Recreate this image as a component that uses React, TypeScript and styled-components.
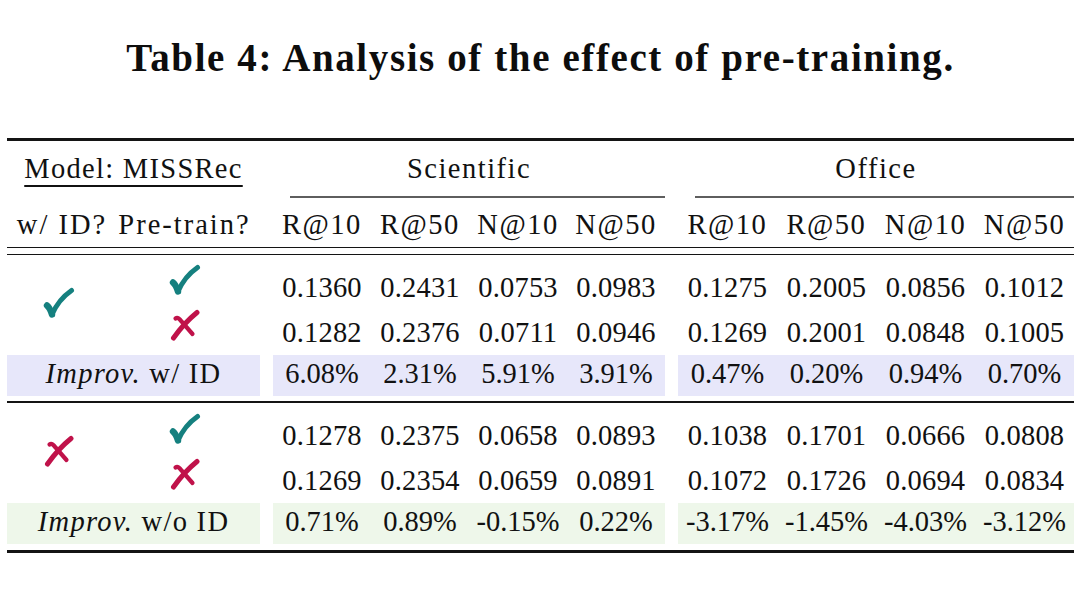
import styled, { createGlobalStyle } from "styled-components";

const TEAL = "#15807f";
const CRIMSON = "#c0124a";

const GlobalStyle = createGlobalStyle`
  html, body {
    margin: 0;
    padding: 0;
    background: #ffffff;
  }
  body {
    font-family: "Liberation Serif", "Times New Roman", serif;
    color: #111111;
  }
`;

type Mark = "yes" | "no";

interface DataRow {
  pretrain: Mark;
  scientific: string[];
  office: string[];
}

interface Block {
  withId: Mark;
  rows: DataRow[];
  label: string;
  tone: "lavender" | "mint";
  scientificGain: string[];
  officeGain: string[];
}

const blocks: Block[] = [
  {
    withId: "yes",
    rows: [
      {
        pretrain: "yes",
        scientific: ["0.1360", "0.2431", "0.0753", "0.0983"],
        office: ["0.1275", "0.2005", "0.0856", "0.1012"],
      },
      {
        pretrain: "no",
        scientific: ["0.1282", "0.2376", "0.0711", "0.0946"],
        office: ["0.1269", "0.2001", "0.0848", "0.1005"],
      },
    ],
    label: "w/ ID",
    tone: "lavender",
    scientificGain: ["6.08%", "2.31%", "5.91%", "3.91%"],
    officeGain: ["0.47%", "0.20%", "0.94%", "0.70%"],
  },
  {
    withId: "no",
    rows: [
      {
        pretrain: "yes",
        scientific: ["0.1278", "0.2375", "0.0658", "0.0893"],
        office: ["0.1038", "0.1701", "0.0666", "0.0808"],
      },
      {
        pretrain: "no",
        scientific: ["0.1269", "0.2354", "0.0659", "0.0891"],
        office: ["0.1072", "0.1726", "0.0694", "0.0834"],
      },
    ],
    label: "w/o ID",
    tone: "mint",
    scientificGain: ["0.71%", "0.89%", "-0.15%", "0.22%"],
    officeGain: ["-3.17%", "-1.45%", "-4.03%", "-3.12%"],
  },
];

const metrics = ["R@10", "R@50", "N@10", "N@50"];

function CheckMark() {
  return (
    <svg width="32" height="32" viewBox="0 0 32 32">
      <path
        d="M4 18.5 Q7 21 9 27.5"
        fill="none"
        stroke={TEAL}
        strokeWidth="6.4"
        strokeLinecap="round"
      />
      <path
        d="M9 27.5 Q15.5 12.5 28.5 3.5"
        fill="none"
        stroke={TEAL}
        strokeWidth="5"
        strokeLinecap="round"
      />
    </svg>
  );
}

function CrossMark() {
  return (
    <svg width="32" height="32" viewBox="0 0 32 32">
      <path
        d="M28 3.5 C20 10 11.5 19 4.5 29"
        fill="none"
        stroke={CRIMSON}
        strokeWidth="5"
        strokeLinecap="round"
      />
      <path
        d="M6.5 9.5 C8.5 8 10.5 9.5 12.5 12.5 L23.5 25"
        fill="none"
        stroke={CRIMSON}
        strokeWidth="4.2"
        strokeLinecap="round"
      />
    </svg>
  );
}

function Symbol({ mark }: { mark: Mark }) {
  return mark === "yes" ? <CheckMark /> : <CrossMark />;
}

export default function App() {
  return (
    <>
      <GlobalStyle />
      <Page>
        <Caption>Table 4: Analysis of the effect of pre-training.</Caption>

        <Table>
          <Rule $weight={3} />

          <HeadGrid $height={55}>
            <ModelCell>
              <Underlined>Model: MISSRec</Underlined>
            </ModelCell>
            <GroupTitle $start={4}>Scientific</GroupTitle>
            <GroupTitle $start={9}>Office</GroupTitle>
          </HeadGrid>

          <CmidGrid>
            <CmidLine $start={4} />
            <CmidLine $start={9} />
          </CmidGrid>

          <HeadGrid $height={49} $padTop={4}>
            <HeadText $col={1} $shift={0}>w/ ID?</HeadText>
            <HeadText $col={2} $shift={8}>Pre-train?</HeadText>
            {metrics.map((m, i) => (
              <Metric key={"s" + m} $col={4 + i}>
                {m}
              </Metric>
            ))}
            {metrics.map((m, i) => (
              <Metric key={"o" + m} $col={9 + i}>
                {m}
              </Metric>
            ))}
          </HeadGrid>

          <Rule $weight={1.6} />
          <Rule $weight={1.6} $gap={5.5} />

          {blocks.map((block, b) => (
            <div key={block.label}>
              {b > 0 && <Rule $weight={2} $gap={5} />}
              <BodyGrid $padTop={b === 0 ? 9.5 : 10.5}>
                <IdMark>
                  <Symbol mark={block.withId} />
                </IdMark>
                {block.rows.map((row, r) => (
                  <RowCells key={"m" + r}>
                    {/* pre-train column */}
                    <PretrainMark $row={r + 1}>
                      <Symbol mark={row.pretrain} />
                    </PretrainMark>
                    {row.scientific.map((v, i) => (
                      <Value key={"s" + i} $col={4 + i} $row={r + 1}>
                        {v}
                      </Value>
                    ))}
                    {row.office.map((v, i) => (
                      <Value key={"o" + i} $col={9 + i} $row={r + 1}>
                        {v}
                      </Value>
                    ))}
                  </RowCells>
                ))}
                <GainLabel $tone={block.tone}>
                  <em>Improv.</em> {block.label}
                </GainLabel>
                {block.scientificGain.map((v, i) => (
                  <Gain key={"sg" + i} $col={4 + i} $tone={block.tone}>
                    {v}
                  </Gain>
                ))}
                {block.officeGain.map((v, i) => (
                  <Gain key={"og" + i} $col={9 + i} $tone={block.tone}>
                    {v}
                  </Gain>
                ))}
              </BodyGrid>
            </div>
          ))}

          <Rule $weight={3} $gap={5.5} />
        </Table>
      </Page>
    </>
  );
}

const columns = "110px 143px 13px repeat(4, 98px) 13px repeat(4, 99px)";

const toneColor = {
  lavender: "#e7e7fa",
  mint: "#eef7ea",
};

const Page = styled.div`
  width: 1080px;
  height: 592px;
  padding: 0 6px 0 7px;
  box-sizing: border-box;
`;

const Caption = styled.h1`
  height: 114px;
  margin: 0 0 24px;
  display: flex;
  align-items: center;
  justify-content: center;
  font-size: 39px;
  font-weight: 700;
  letter-spacing: 1.6px;
  color: #0d0d0d;
`;

const Table = styled.div`
  display: flex;
  flex-direction: column;
  width: 1067px;
  font-size: 28.5px;
`;

const Rule = styled.div<{ $weight: number; $gap?: number }>`
  height: ${(p) => p.$weight}px;
  margin-top: ${(p) => p.$gap ?? 0}px;
  background: #141414;
`;

const HeadGrid = styled.div<{ $height: number; $padTop?: number }>`
  display: grid;
  grid-template-columns: ${columns};
  height: ${(p) => p.$height}px;
  padding-top: ${(p) => p.$padTop ?? 0}px;
  box-sizing: border-box;
  align-items: center;
  line-height: 45px;
  letter-spacing: 1.3px;
`;

const ModelCell = styled.div`
  grid-column: 1 / 3;
  text-align: center;
`;

const Underlined = styled.span`
  text-decoration: underline;
  text-decoration-thickness: 1.5px;
  text-underline-offset: 7px;
`;

const GroupTitle = styled.div<{ $start: number }>`
  grid-column: ${(p) => p.$start} / span 4;
  text-align: center;
  letter-spacing: 1.5px;
`;

const CmidGrid = styled.div`
  display: grid;
  grid-template-columns: ${columns};
  height: 1.5px;
`;

const CmidLine = styled.div<{ $start: number }>`
  grid-column: ${(p) => p.$start} / span 4;
  margin-left: 17px;
  background: #5e5e5e;
`;

const HeadText = styled.div<{ $col: number; $shift: number }>`
  grid-column: ${(p) => p.$col};
  text-align: center;
  padding-right: ${(p) => p.$shift}px;
  white-space: nowrap;
  letter-spacing: 2px;
`;

const Metric = styled.div<{ $col: number }>`
  grid-column: ${(p) => p.$col};
  text-align: center;
  letter-spacing: 1.5px;
`;

const BodyGrid = styled.div<{ $padTop: number }>`
  display: grid;
  grid-template-columns: ${columns};
  grid-template-rows: 45px 45px 41px;
  padding-top: ${(p) => p.$padTop}px;
  line-height: 45px;
`;

const RowCells = styled.div`
  display: contents;
`;

const IdMark = styled.div`
  grid-column: 1;
  grid-row: 1 / 3;
  display: flex;
  align-items: center;
  justify-content: center;
  padding: 0 7px 14px 0;
`;

const PretrainMark = styled.div<{ $row: number }>`
  grid-column: 2;
  grid-row: ${(p) => p.$row};
  display: flex;
  align-items: center;
  justify-content: center;
  padding: 0 7px 14px 0;
`;

const Value = styled.div<{ $col: number; $row: number }>`
  grid-column: ${(p) => p.$col};
  grid-row: ${(p) => p.$row};
  text-align: center;
  letter-spacing: 0.2px;
`;

const GainLabel = styled.div<{ $tone: "lavender" | "mint" }>`
  grid-column: 1 / 3;
  grid-row: 3;
  background: ${(p) => toneColor[p.$tone]};
  text-align: center;
  line-height: 37px;
  padding-bottom: 4px;
  letter-spacing: 1.3px;

  em {
    font-style: italic;
  }
`;

const Gain = styled.div<{ $col: number; $tone: "lavender" | "mint" }>`
  grid-column: ${(p) => p.$col};
  grid-row: 3;
  background: ${(p) => toneColor[p.$tone]};
  text-align: center;
  line-height: 37px;
  padding-bottom: 4px;
`;
